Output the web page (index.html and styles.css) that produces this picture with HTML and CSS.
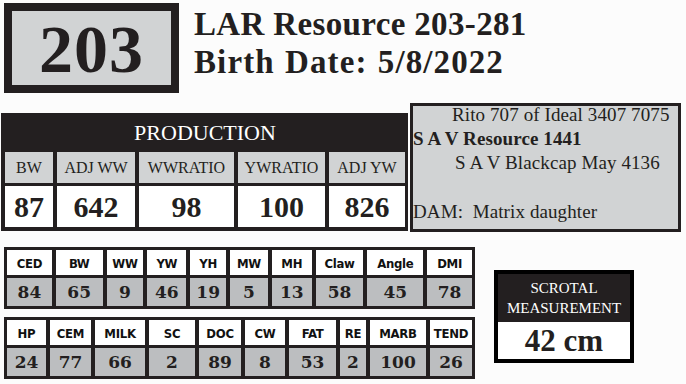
FILE: index.html
```html
<!DOCTYPE html>
<html>
<head>
<meta charset="utf-8">
<link rel="stylesheet" href="styles.css">
</head>
<body>
<div class="page">
  <div class="top">
    <div class="tag">203</div>
    <div class="title">
      <div class="t1">LAR Resource 203-281</div>
      <div class="t2">Birth Date: 5/8/2022</div>
    </div>
  </div>

  <div class="mid">
    <div class="prod">
      <div class="prod-head">PRODUCTION</div>
      <div class="prod-grid">
        <div class="pl">BW</div>
        <div class="pl">ADJ WW</div>
        <div class="pl">WWRATIO</div>
        <div class="pl">YWRATIO</div>
        <div class="pl">ADJ YW</div>
        <div class="pv">87</div>
        <div class="pv">642</div>
        <div class="pv">98</div>
        <div class="pv">100</div>
        <div class="pv">826</div>
      </div>
    </div>
    <div class="ped">
      <div class="ped-text">
        <div class="sire-sire">Rito 707 of Ideal 3407 7075</div>
        <div class="sire">S A V Resource 1441</div>
        <div class="sire-dam">S A V Blackcap May 4136</div>
        <div class="dam">DAM:&nbsp; Matrix daughter</div>
      </div>
    </div>
  </div>

  <div class="bottom">
    <div class="epds">
      <div class="epd epd1">
        <div class="el">CED</div><div class="el">BW</div><div class="el">WW</div><div class="el">YW</div><div class="el">YH</div><div class="el">MW</div><div class="el">MH</div><div class="el">Claw</div><div class="el">Angle</div><div class="el">DMI</div>
        <div class="ev">84</div><div class="ev">65</div><div class="ev">9</div><div class="ev">46</div><div class="ev">19</div><div class="ev">5</div><div class="ev">13</div><div class="ev">58</div><div class="ev">45</div><div class="ev">78</div>
      </div>
      <div class="epd epd2">
        <div class="el">HP</div><div class="el">CEM</div><div class="el">MILK</div><div class="el">SC</div><div class="el">DOC</div><div class="el">CW</div><div class="el">FAT</div><div class="el">RE</div><div class="el">MARB</div><div class="el">TEND</div>
        <div class="ev">24</div><div class="ev">77</div><div class="ev">66</div><div class="ev">2</div><div class="ev">89</div><div class="ev">8</div><div class="ev">53</div><div class="ev">2</div><div class="ev">100</div><div class="ev">26</div>
      </div>
    </div>
    <div class="scrotal">
      <div class="sc-head">SCROTAL<br>MEASUREMENT</div>
      <div class="sc-val">42 cm</div>
    </div>
  </div>
</div>
</body>
</html>
```

FILE: styles.css
```css
* { box-sizing: border-box; }
html, body { margin: 0; padding: 0; }
body {
  width: 686px;
  height: 384px;
  overflow: hidden;
  background: #fcfcfc;
  color: #231f20;
  font-family: "Liberation Serif", "Times New Roman", serif;
}
.page { padding-top: 3px; }

.top { display: flex; align-items: flex-start; }
.tag {
  margin-left: 4px;
  width: 175px;
  height: 90px;
  border: 8px solid #231f20;
  background: #d1d3d4;
  display: flex;
  align-items: center;
  justify-content: center;
  font-size: 68px;
  font-weight: bold;
  letter-spacing: 1px;
  line-height: 1;
  padding-top: 2px;
}
.title {
  margin-left: 15px;
  margin-top: 2px;
  font-size: 33px;
  font-weight: bold;
  line-height: 38px;
}
.t1 { letter-spacing: 0.35px; }
.t2 { letter-spacing: 1.1px; word-spacing: 1px; }

.mid { display: flex; align-items: flex-start; margin-top: 10px; }
.prod {
  margin-top: 10px;
  margin-left: 1px;
  width: 407px;
  background: #231f20;
  padding: 0 3px 4px 4px;
}
.prod-head {
  height: 39px;
  color: #fff;
  font-size: 22px;
  text-align: center;
  line-height: 40px;
}
.prod-grid {
  display: grid;
  grid-template-columns: 48fr 78fr 95fr 87fr 76fr;
  grid-template-rows: 31px 41px;
  column-gap: 4px;
  row-gap: 3px;
}
.pl {
  background: #d1d3d4;
  font-size: 16px;
  display: flex;
  align-items: center;
  justify-content: center;
}
.pv {
  background: #fff;
  font-size: 30px;
  font-weight: bold;
  display: flex;
  align-items: center;
  justify-content: center;
}
.ped {
  margin-left: 2px;
  width: 271px;
  height: 129px;
  border: 3px solid #231f20;
  background: #d1d3d4;
  font-size: 19px;
  line-height: 24px;
  letter-spacing: 0.1px;
}
.ped-text { margin-top: -3px; }
.sire-sire { padding-left: 39px; }
.sire { font-weight: bold; }
.sire-dam { padding-left: 42px; }
.dam { margin-top: 25px; }

.bottom { display: flex; align-items: flex-start; margin-top: 15px; }
.epds {
  margin-left: 4px;
  width: 471px;
  display: flex;
  flex-direction: column;
  gap: 8px;
}
.epd {
  background: #231f20;
  padding: 3px;
  display: grid;
  grid-template-rows: 25px 28px;
  column-gap: 4px;
  row-gap: 3px;
}
.epd1 { grid-template-columns: 45fr 47fr 37fr 39fr 36fr 38fr 40fr 48fr 56fr 45fr; }
.epd2 { grid-template-columns: 39fr 41fr 50fr 46fr 42fr 40fr 47fr 26fr 56fr 42fr; }
.el {
  background: #fff;
  font-family: "DejaVu Sans Condensed", "DejaVu Sans", sans-serif;
  font-stretch: condensed;
  font-weight: bold;
  font-size: 13px;
  letter-spacing: -0.3px;
  display: flex;
  align-items: center;
  justify-content: center;
  color: #111;
  padding-top: 1px;
}
.ev {
  background: #bcbec0;
  font-family: "DejaVu Serif", serif;
  font-weight: bold;
  font-size: 17px;
  display: flex;
  align-items: center;
  justify-content: center;
  color: #231f20;
}
.scrotal {
  margin-left: 19px;
  margin-top: 23px;
  width: 140px;
  height: 93px;
  border: 4px solid #000;
  background: #fff;
}
.sc-head {
  height: 48px;
  background: #231f20;
  color: #fff;
  font-size: 15px;
  line-height: 20px;
  text-align: center;
  padding-top: 4px;
}
.sc-val {
  height: 37px;
  font-size: 31px;
  font-weight: bold;
  text-align: center;
  line-height: 38px;
}
```
